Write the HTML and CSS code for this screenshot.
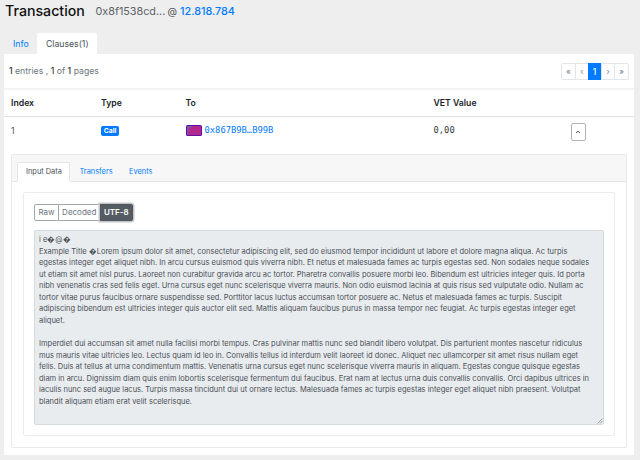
FILE: index.html
```html
<!DOCTYPE html>
<html lang="en">
<head>
<meta charset="utf-8">
<title>Transaction</title>
<link rel="stylesheet" href="styles.css">
</head>
<body>
<header class="title"><h1>Transaction</h1><span class="hash">0x8f1538cd...</span><span class="at">@</span><a class="block">12.818.784</a></header>
<nav class="tabs"><a class="tab info">Info</a><a class="tab active">Clauses(1)</a></nav>
<main class="panel">
  <div class="toolbar">
    <div class="count"><b>1</b> entries , <b>1</b> of <b>1</b> pages</div>
    <div class="pager"><span>«</span><span>‹</span><span class="current">1</span><span>›</span><span>»</span></div>
  </div>
  <div class="row head"><span>Index</span><span>Type</span><span>To</span><span>VET Value</span></div>
  <div class="row clause">
    <span>1</span>
    <span><span class="badge">Call</span></span>
    <span class="to"><svg class="avatar" viewBox="0 0 16 11"><rect width="16" height="11" rx="1.5" fill="#5b12a5"/><path d="M1 1h14v9H1z" fill="#b3268b"/><path d="M1 1h6L3 4 2 10H1z" fill="#8751a0"/></svg><a class="mono">0x867B9B…B99B</a></span>
    <span class="mono">0,00</span>
    <span class="toggle"><svg viewBox="0 0 8 8"><path d="M2 5 4 3.2 6 5" fill="none" stroke="#495057" stroke-width="1"/></svg></span>
  </div>
  <section class="card">
    <nav class="card-tabs"><a class="subtab active">Input Data</a><a class="subtab transfers">Transfers</a><a class="subtab">Events</a></nav>
    <div class="inner">
      <div class="modes"><span class="raw">Raw</span><span class="decoded">Decoded</span><span class="utf">UTF-8</span></div>
      <div class="data"><p>i e�@�
Example Title �Lorem ipsum dolor sit amet, consectetur adipiscing elit, sed do eiusmod tempor incididunt ut labore et dolore magna aliqua. Ac turpis
egestas integer eget aliquet nibh. In arcu cursus euismod quis viverra nibh. Et netus et malesuada fames ac turpis egestas sed. Non sodales neque sodales
ut etiam sit amet nisl purus. Laoreet non curabitur gravida arcu ac tortor. Pharetra convallis posuere morbi leo. Bibendum est ultricies integer quis. Id porta
nibh venenatis cras sed felis eget. Urna cursus eget nunc scelerisque viverra mauris. Non odio euismod lacinia at quis risus sed vulputate odio. Nullam ac
tortor vitae purus faucibus ornare suspendisse sed. Porttitor lacus luctus accumsan tortor posuere ac. Netus et malesuada fames ac turpis. Suscipit
adipiscing bibendum est ultricies integer quis auctor elit sed. Mattis aliquam faucibus purus in massa tempor nec feugiat. Ac turpis egestas integer eget
aliquet.

Imperdiet dui accumsan sit amet nulla facilisi morbi tempus. Cras pulvinar mattis nunc sed blandit libero volutpat. Dis parturient montes nascetur ridiculus
mus mauris vitae ultricies leo. Lectus quam id leo in. Convallis tellus id interdum velit laoreet id donec. Aliquet nec ullamcorper sit amet risus nullam eget
felis. Duis at tellus at urna condimentum mattis. Venenatis urna cursus eget nunc scelerisque viverra mauris in aliquam. Egestas congue quisque egestas
diam in arcu. Dignissim diam quis enim lobortis scelerisque fermentum dui faucibus. Erat nam at lectus urna duis convallis convallis. Orci dapibus ultrices in
iaculis nunc sed augue lacus. Turpis massa tincidunt dui ut ornare lectus. Malesuada fames ac turpis egestas integer eget aliquet nibh praesent. Volutpat
blandit aliquam etiam erat velit scelerisque.</p><svg class="grip" viewBox="0 0 6 6"><path d="M.5 5.5l5-5M3 5.5l2.500-2.500" stroke="#8b9095" stroke-width=".8"/></svg></div>
    </div>
  </section>
</main>
</body>
</html>
```

FILE: styles.css
```css
* { box-sizing: border-box; }
body { margin: 0; width: 640px; height: 460px; overflow: hidden; background: #eee; font-family: Inter, sans-serif; font-size: 8.7px; color: #495057; white-space: nowrap; }
a { color: #007bff; text-decoration: none; }
.title { height: 33px; padding-left: 5px; display: flex; line-height: 24px; font-size: 10.5px; }
.title h1 { margin: 0 10.500px 0 0; width: 80px; font-size: 14.2px; font-weight: 500; line-height: 21px; color: #111; }
.hash { width: 72px; color: #5c636a; font-size: 10.8px; }
.at { width: 12.500px; font-size: 9.800px; }
.block { font-weight: 500; font-size: 10.8px; }
.tabs { height: 21px; padding-left: 4px; display: flex; line-height: 22px; }
.info { width: 33px; padding-left: 9px; }
.tab.active { width: 60px; padding-left: 9px; background: #fff; color: #495057; border-radius: 2px 2px 0 0; }
.panel { margin-left: 4px; width: 629.500px; height: 400.500px; background: #fff; }
.toolbar { height: 36px; padding: 9px 4.500px 0 5px; display: flex; justify-content: space-between; border-bottom: 2px solid #f3f3f3; }
.count { line-height: 17px; color: #6c757d; }
.count b { font-weight: 500; color: #343a40; }
.pager { display: flex; width: 68px; height: 17px; border: 1px solid #e2e5e9; border-radius: 2px; line-height: 15px; color: #6c757d; font-size: 8px; text-align: center; }
.pager span { flex: 1; border-left: 1px solid #e2e5e9; }
.pager span:first-child { border-left: 0; }
.pager .current { margin: -1px 0; background: #007bff; color: #fff; border: 0; line-height: 18px; font-size: 8.500px; font-weight: 500; }
.row { display: grid; grid-template-columns: 90px 84.500px 248px 137px 16px; padding-left: 7px; align-items: center; }
.head { height: 27px; border-bottom: 1px solid #dee2e6; font-weight: 600; color: #212529; }
.clause { height: 27px; }
.badge { display: block; width: 18px; height: 10px; margin-top: 1px; border-radius: 2px; background: #007bff; color: #fff; text-align: center; font-size: 6.8px; font-weight: 700; line-height: 10px; }
.to { display: flex; align-items: center; gap: 3px; margin-top: -1px; }
.avatar { width: 16px; height: 11px; }
.mono { font-family: "DejaVu Sans Mono", monospace; font-size: 8.800px; }
.clause > .mono { color: #343a40; margin-top: -1px; }
.toggle { width: 15px; height: 18px; margin-top: 3px; border: 1px solid #aeb2b6; border-radius: 2px; display: flex; align-items: center; justify-content: center; }
.toggle svg { width: 8px; height: 8px; }
.card { margin: 10px 7px 0; height: 294px; border: 1px solid #e9e9e9; border-radius: 2px; }
.card-tabs { height: 27px; padding: 7px 0 0 5px; display: flex; background: #f7f7f7; border-bottom: 1px solid #e5e5e5; font-size: 7.400px; line-height: 20px; }
.subtab { height: 20px; padding-left: 9.500px; }
.subtab.active { width: 53px; background: #fff; color: #495057; border: 1px solid #e5e5e5; border-bottom-color: #fff; border-radius: 2px 2px 0 0; padding-left: 8px; line-height: 18px; }
.transfers { width: 49.500px; }
.inner { margin: 10px 10.500px 0; height: 244px; padding: 11px 11px 0 10.500px; border: 1px solid #ececec; border-radius: 2px; }
.modes { display: flex; height: 17px; line-height: 15.500px; font-size: 8px; color: #6c757d; text-align: center; }
.modes span { border: 1px solid #a2a7ac; }
.raw { width: 25px; border-radius: 2px 0 0 2px; }
.modes .decoded { width: 40.500px; border-left: 0; border-right: 0; }
.modes .utf { width: 33.500px; background: #545b62; color: #fff; font-weight: 600; border-color: #4e555b; border-radius: 0 2px 2px 0; box-shadow: 0 0 0 1.500px #c3c6ca; }
.data { margin-top: 9px; height: 195px; width: 570px; position: relative; border: 1px solid #d5dadf; border-radius: 2px; background: #e9ecef; padding: 3px 4px; }
.data p { margin: 0; white-space: pre; font-size: 7.510px; line-height: 11.570px; }
.grip { position: absolute; right: 0; bottom: 0; width: 6px; height: 6px; }
```
